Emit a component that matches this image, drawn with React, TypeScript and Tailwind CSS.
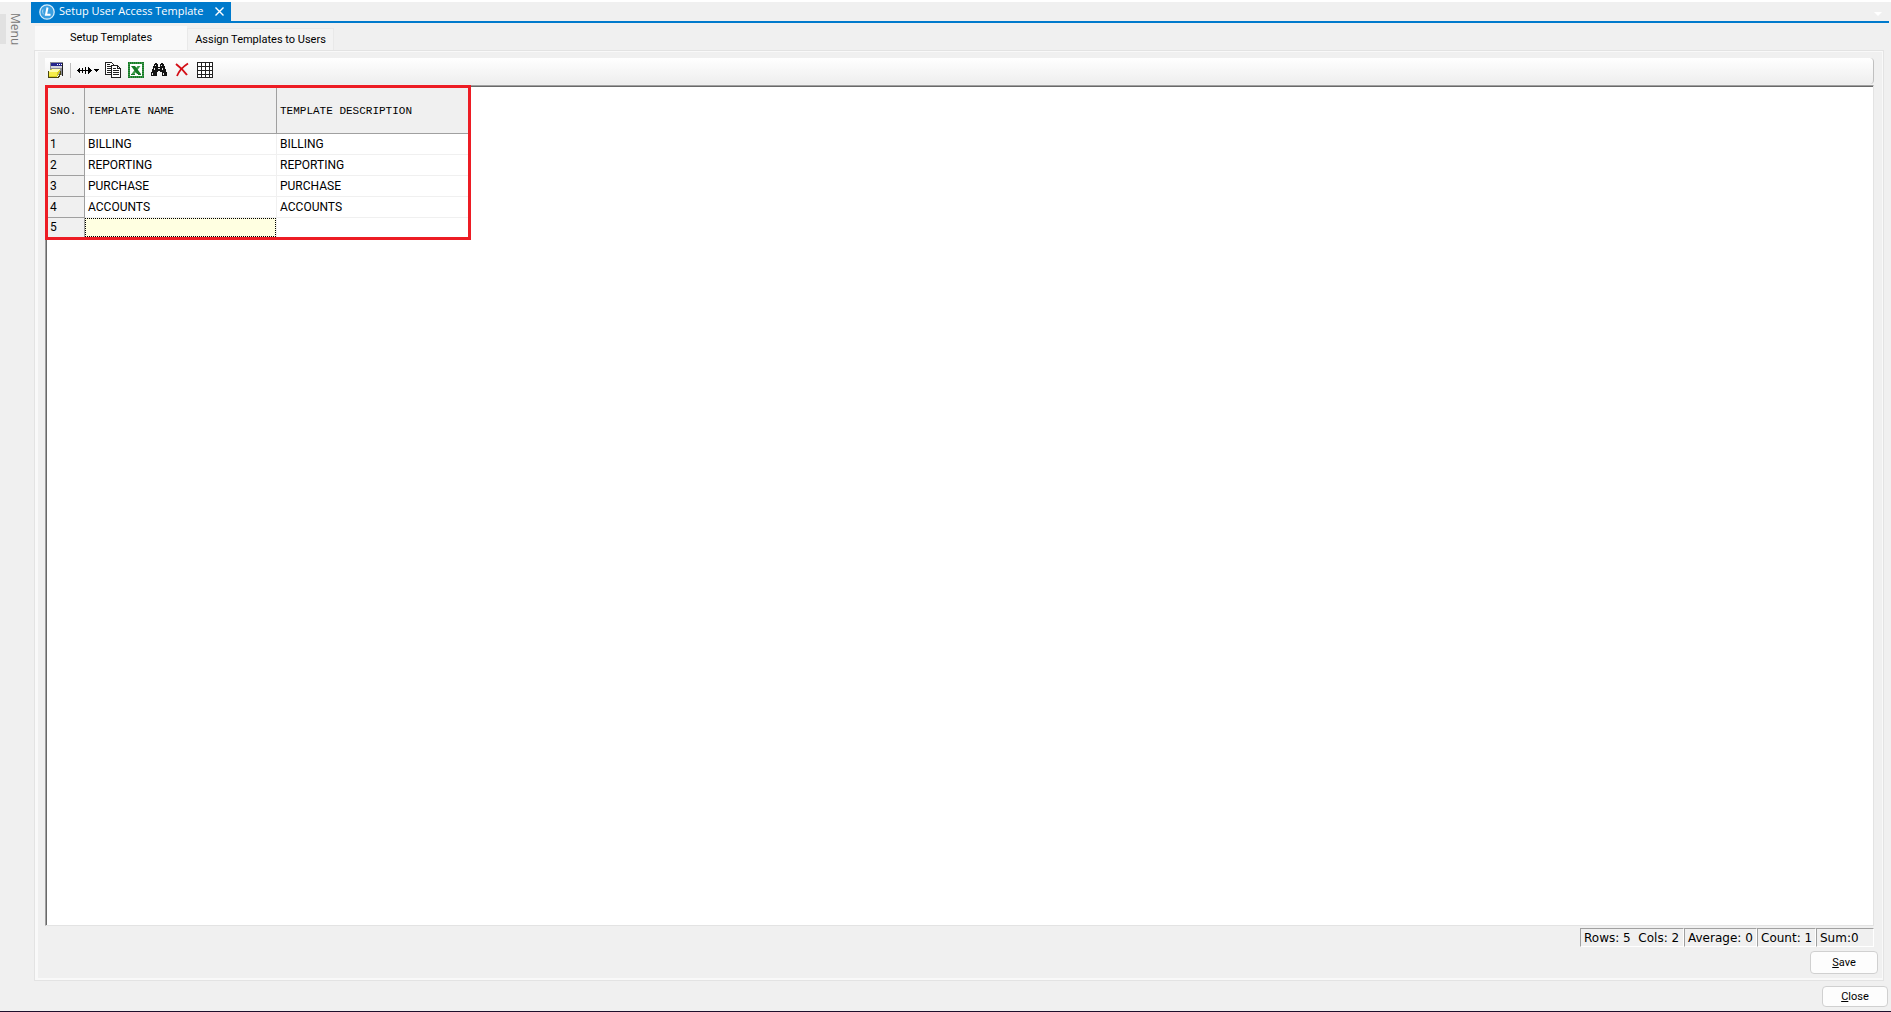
import { useState } from "react";

const templates = [
  { name: "BILLING", description: "BILLING" },
  { name: "REPORTING", description: "REPORTING" },
  { name: "PURCHASE", description: "PURCHASE" },
  { name: "ACCOUNTS", description: "ACCOUNTS" },
  { name: "", description: "" },
];

function LogoIcon() {
  return (
    <svg width="16" height="16" viewBox="0 0 16 16">
      <circle cx="8" cy="8" r="7.2" fill="#3a9fe0" stroke="#d6edfb" strokeWidth="1.300" />
      <path d="M8.500 3.500 7 10.700h4.500" fill="none" stroke="#fff" strokeWidth="2" />
      <path d="M4 5.500c-.8 2-.3 4 1 5" fill="none" stroke="#a9d8f5" strokeWidth="1" />
    </svg>
  );
}

function FormIcon() {
  return (
    <svg width="16" height="16" viewBox="0 0 16 16" shapeRendering="crispEdges">
      <path d="M2 0h13v13H2z" fill="#8c8c94" />
      <path d="M3 1h11v3H3z" fill="#26268c" />
      <path d="M9 2h1v1H9zM11 2h1v1h-1zM13 2h1v1h-1z" fill="#fff" />
      <path d="M3 4h11v2H3z" fill="#d4d4dc" />
      <path d="M14 1h1v13h-1z" fill="#222" />
      <path d="M4 7h8v3h-1v2h-1v2H9v1H1V9h1V8h1V7z" fill="#d8cf1e" />
      <path d="M4 7h8v1h-1v1h-1v1H1V9h1V8h2z" fill="#fffbb0" />
      <path d="M1 10h8v4H1z" fill="#f6ec4a" />
      <path d="M0 9h1v6h9v-1h1v-2h1V9h1v4h-1v2h-1v1H0z" fill="#4a4610" />
    </svg>
  );
}

function WidthIcon() {
  return (
    <svg width="23" height="16" viewBox="0 0 23 16" shapeRendering="crispEdges">
      <path d="M1 8h13v1H1zM5 6h1v5H5zM8 5h1v7H8z" fill="#000" />
      <path d="M0 8h1v1H0zM1 7h1v3H1zM2 6h1v5H2zM14 8h1v1h-1zM13 7h1v3h-1zM12 6h1v5h-1zM11 5h1v7h-1z" fill="#000" />
      <path d="M17 7h5v1h-5zM18 8h3v1h-3zM19 9h1v1h-1z" fill="#000" />
    </svg>
  );
}

function CopyIcon() {
  return (
    <svg width="16" height="16" viewBox="0 0 16 16" shapeRendering="crispEdges">
      <path d="M.5.5h6l3 3v9h-9z" fill="#fff" stroke="#222" />
      <path d="M2 2.500h3M2 4.500h4M2 6.500h4M2 8.500h4M2 10.500h4" stroke="#222" />
      <path d="M6.500 3.500h6l3 3v9h-9z" fill="#fff" stroke="#222" />
      <path d="M12.500 3.500v3h3" fill="none" stroke="#222" />
      <path d="M8 6.500h3M8 8.500h6M8 10.500h6M8 12.500h6" stroke="#222" />
    </svg>
  );
}

function ExcelIcon() {
  return (
    <svg width="16" height="16" viewBox="0 0 16 16">
      <path d="M1 1h14v14H1z" fill="#fff" stroke="#167a26" strokeWidth="2" />
      <path d="M1 1h14v14H1z" fill="none" stroke="#5cae66" strokeWidth="1" strokeDasharray="1 1" />
      <path d="M12.500 4H9.500l-6 8h3z" fill="#3d9a4a" />
      <path d="M3 4h4l6 8H9z" fill="#167a26" />
      <path d="M3 12.500h4M10 12.500h3" fill="none" stroke="#167a26" />
    </svg>
  );
}

function FindIcon() {
  return (
    <svg width="16" height="16" viewBox="0 0 16 16" shapeRendering="crispEdges">
      <path
        d="M4 1h2v1h1v3h2V2h1V1h2v1h1v2h1v3h1v3h1v4h-5v-4H9v-1H7v1H6v4H0v-4h1V7h1V4h1V2h1z"
        fill="#111"
      />
      <path d="M4 3h1v1H4zM3 6h1v2H3zM10 3h1v1h-1zM11 6h1v2h-1zM7 6h2v1H7zM1 11h1v2H1zM12 11h1v2h-1z" fill="#e5e5e5" />
    </svg>
  );
}

function DeleteIcon() {
  return (
    <svg width="14" height="16" viewBox="0 0 14 16">
      <path d="M1 2c4 3 8 7 11 11" fill="none" stroke="#d40f17" strokeWidth="2" />
      <path d="M13 1.500C9 4 4 9 2 14" fill="none" stroke="#d40f17" strokeWidth="1.800" />
    </svg>
  );
}

function GridIcon() {
  return (
    <svg width="16" height="16" viewBox="0 0 16 16" shapeRendering="crispEdges">
      <path d="M.5.5h15v15H.5z" fill="#fff" stroke="#222" />
      <path d="M4.500 0v16M8.500 0v16M12.500 0v16M0 4.500h16M0 8.500h16M0 12.500h16" stroke="#222" />
    </svg>
  );
}

const statusCell =
  "h-[19px] border border-t-[#a0a0a0] border-r-white border-b-white border-l-[#a0a0a0] pl-[3px] leading-[18px] whitespace-pre";

export default function App() {
  const [tab, setTab] = useState("setup");

  return (
    <div className="flex min-h-screen flex-col border-b border-[#1d0f2c] bg-[#f0f0f0] pt-[2px] font-[Roboto,sans-serif] text-[11px] text-black shadow-[inset_0_2px_0_#fff]">
      <div className="flex flex-1">
        {/* Collapsed side menu */}
        <aside className="w-[31px] shrink-0 pt-3">
          <button className="flex h-[30px] items-center border-l-[6px] border-[#e1e1e1] pl-px font-['Open_Sans',sans-serif] text-xs leading-4 text-[#777]">
            <span className="[writing-mode:vertical-rl]">Menu</span>
          </button>
        </aside>

        <main className="flex min-w-0 flex-1 flex-col">
          {/* Document tab */}
          <div className="mr-[2px] flex h-[21px] items-start justify-between border-b-2 border-[#007acc]">
            <div className="flex h-[19px] w-[200px] items-center bg-[#007acc] pl-2 font-['Open_Sans',sans-serif] text-white">
              <LogoIcon />
              <span className="ml-1 flex-1 whitespace-nowrap">Setup User Access Template</span>
              <button aria-label="Close tab" className="mr-[7px]">
                <svg width="9" height="9" viewBox="0 0 9 9">
                  <path d="M.5.5l8 8M8.500.5l-8 8" stroke="#fff" strokeWidth="1.400" />
                </svg>
              </button>
            </div>
            <button aria-label="Open documents" className="mt-[10px] mr-[7px]">
              <svg width="8" height="4" viewBox="0 0 8 4">
                <path d="M0 0h8L4 4z" fill="#fff" />
              </svg>
            </button>
          </div>

          <div role="tablist" className="ml-1 mt-[3px] flex h-6 items-end">
            <button
              role="tab"
              aria-selected={tab === "setup"}
              onClick={() => setTab("setup")}
              className="h-6 w-[152px] bg-[#f9f9f9]"
            >
              Setup Templates
            </button>
            <button
              role="tab"
              aria-selected={tab === "assign"}
              onClick={() => setTab("assign")}
              className="h-[22px] w-[147px] border border-b-0 border-[#e9e9e9] bg-[#f3f3f3] pt-[2px] whitespace-nowrap"
            >
              Assign Templates to Users
            </button>
          </div>

          <section className="mr-[7px] ml-[3px] flex flex-1 flex-col border border-[#e3e3e3] bg-[#f0f0f0] pt-[7px] pr-[9px] pb-[6px] pl-[6px] shadow-[inset_3px_-2px_0_#f9f9f9,inset_-1px_1px_0_#f9f9f9]">
            {/* Toolbar */}
            <div className="ml-1 flex h-[26px] items-center rounded-r border-r border-[#c0c0c0] bg-linear-to-b from-white to-[#eeeeee] pb-[2px] pl-[3px]">
              <button aria-label="Form view"><FormIcon /></button>
              <span className="mx-[6px] h-[15px] w-px bg-[#bdbdbd]" />
              <button aria-label="Column width"><WidthIcon /></button>
              <button aria-label="Copy" className="ml-[5px]"><CopyIcon /></button>
              <button aria-label="Export to Excel" className="ml-[7px]"><ExcelIcon /></button>
              <button aria-label="Find" className="ml-[7px]"><FindIcon /></button>
              <button aria-label="Delete row" className="ml-2"><DeleteIcon /></button>
              <button aria-label="Grid lines" className="ml-2"><GridIcon /></button>
            </div>

            {/* Grid */}
            <div className="mt-px ml-1 flex-1 border border-t-[#a0a0a0] border-r-[#e3e3e3] border-b-[#e3e3e3] border-l-[#a0a0a0] bg-white">
              <div className="h-full border-t border-l border-[#696969]">
                <div className="-mt-[2px] -ml-[2px] w-[426px] border-[3px] border-[#ed1c24] bg-white">
                  <table className="w-full table-fixed border-separate border-spacing-0 text-left text-xs">
                    <colgroup>
                      <col className="w-[37px]" />
                      <col className="w-48" />
                      <col />
                    </colgroup>
                    <thead>
                      <tr className="h-[46px] bg-[#f0f0f0] font-['Liberation_Mono',monospace] text-[11px] [&>th]:border-b [&>th]:border-[#a0a0a0] [&>th]:p-0 [&>th]:pt-[2px] [&>th]:font-normal">
                        <th className="border-r"><span className="pl-[2px]">SNO.</span></th>
                        <th className="border-r"><span className="pl-[3px]">TEMPLATE NAME</span></th>
                        <th><span className="pl-[3px]">TEMPLATE DESCRIPTION</span></th>
                      </tr>
                    </thead>
                    <tbody>
                      {templates.map((row, i) => (
                        <tr key={i} className="h-[21px] leading-5 last:h-[19px] last:leading-[19px] last:[&>*]:border-b-0">
                          <th className="border-r border-b border-[#a0a0a0] bg-[#f0f0f0] p-0 pl-[2px] font-normal">{i + 1}</th>
                          {row.name ? (
                            <td className="border-r border-b border-[#f0f0f0] p-0 pl-[3px]">{row.name}</td>
                          ) : (
                            <td className="border-r border-[#f0f0f0] p-0">
                              <input
                                aria-label="Template name"
                                className="block h-[19px] w-full border border-dotted border-black bg-[#ffffe1] px-[2px] outline-none"
                              />
                            </td>
                          )}
                          <td className="border-b border-[#f0f0f0] p-0 pl-[3px]">{row.description}</td>
                        </tr>
                      ))}
                    </tbody>
                  </table>
                </div>
              </div>
            </div>

            {/* Selection summary */}
            <div className="mt-[2px] flex justify-end font-['DejaVu_Sans',sans-serif] text-xs">
              <span className={`${statusCell} w-[104px]`}>Rows: 5  Cols: 2</span>
              <span className={`${statusCell} w-[73px]`}>Average: 0</span>
              <span className={`${statusCell} w-[59px]`}>Count: 1</span>
              <span className={`${statusCell} w-[58px]`}>Sum:0</span>
            </div>

            <div className="mt-1 -mr-1 flex justify-end">
              <button className="h-[23px] w-[68px] rounded border border-[#d0d0d0] bg-[#fdfdfd] pt-px">
                <u>S</u>ave
              </button>
            </div>
          </section>

          <div className="mt-[5px] mr-[3px] mb-1 flex justify-end">
            <button className="h-[21px] w-[66px] rounded border border-[#d0d0d0] bg-[#fdfdfd] pt-px">
              <u>C</u>lose
            </button>
          </div>
        </main>
      </div>
    </div>
  );
}
